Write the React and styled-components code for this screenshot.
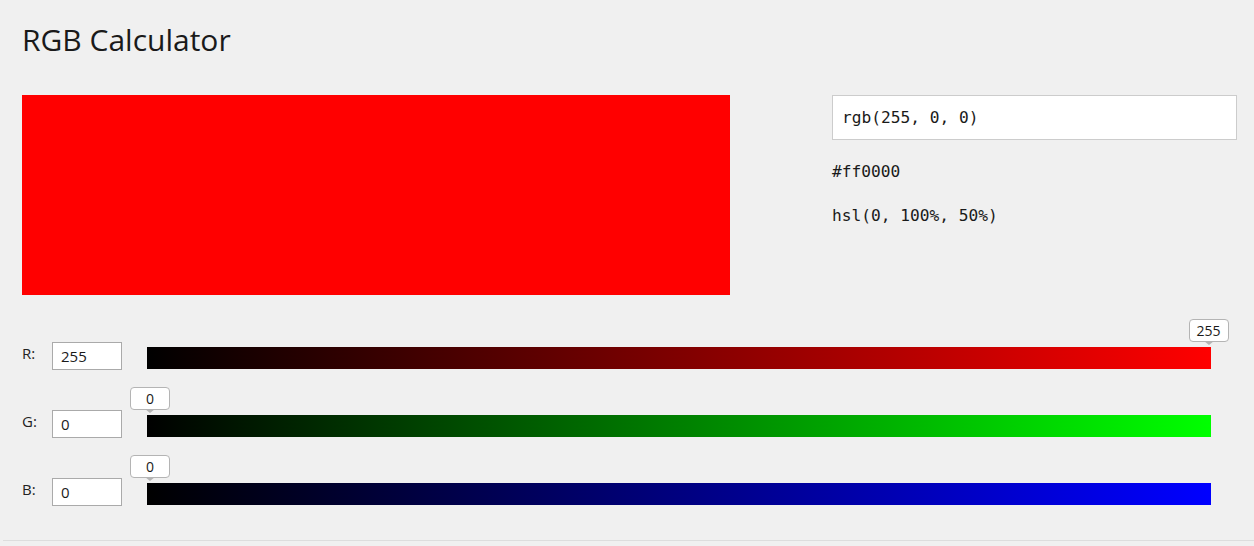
import React from "react";
import styled, { createGlobalStyle } from "styled-components";

const GlobalStyle = createGlobalStyle`
  *, *::before, *::after {
    box-sizing: border-box;
  }
  html, body {
    margin: 0;
    padding: 0;
    background: #f0f0f0;
    font-family: "Open Sans", "Noto Sans", sans-serif;
    color: #222;
  }
`;

const channels = [
  { key: "R", value: 255, to: "#ff0000" },
  { key: "G", value: 0, to: "#00ff00" },
  { key: "B", value: 0, to: "#0000ff" },
];

export default function App() {
  return (
    <>
      <GlobalStyle />
      <StyledPage>
        <StyledTitle>RGB Calculator</StyledTitle>
        <StyledTop>
          <StyledSwatch color="#ff0000" />
          <StyledOutputs>
            <StyledRgbBox>rgb(255, 0, 0)</StyledRgbBox>
            <StyledOutputLine>#ff0000</StyledOutputLine>
            <StyledOutputLine>hsl(0, 100%, 50%)</StyledOutputLine>
          </StyledOutputs>
        </StyledTop>
        <StyledSliders>
          {channels.map((c) => (
            <StyledRow key={c.key}>
              <StyledLabel>{c.key}:</StyledLabel>
              <StyledNumber>{c.value}</StyledNumber>
              <StyledTrack to={c.to}>
                <StyledTip style={{ left: `calc(3px + (100% - 5.5px) * ${c.value / 255})` }}>
                  {c.value}
                </StyledTip>
              </StyledTrack>
            </StyledRow>
          ))}
        </StyledSliders>
      </StyledPage>
      <StyledFooterLine />
    </>
  );
}

const StyledPage = styled.div`
  padding: 20px 17px 0 22px;
`;

const StyledTitle = styled.h1`
  margin: 0;
  font-size: 30px;
  line-height: 40px;
  font-weight: 400;
  color: #1a1a1a;
`;

const StyledTop = styled.div`
  display: flex;
  align-items: flex-start;
  margin-top: 35px;
`;

const StyledSwatch = styled.div`
  width: 708px;
  height: 200px;
  background: ${({ color }) => color};
  flex-shrink: 0;
`;

const StyledOutputs = styled.div`
  flex: 1;
  margin-left: 102px;
  display: flex;
  flex-direction: column;
  font-family: "DejaVu Sans Mono", "Liberation Mono", monospace;
  font-size: 16.2px;
  color: #1a1a1a;
`;

const StyledRgbBox = styled.div`
  height: 45px;
  border: 1px solid #cccccc;
  background: #ffffff;
  display: flex;
  align-items: center;
  padding-left: 9px;
`;

const StyledOutputLine = styled.div`
  line-height: 24px;
  margin-top: 20px;
  &:first-of-type {
    margin-top: 15px;
  }
`;

const StyledSliders = styled.div`
  margin-top: 47px;
  display: flex;
  flex-direction: column;
  gap: 40px;
  padding-right: 26px;
`;

const StyledRow = styled.div`
  display: flex;
  align-items: flex-start;
  height: 28px;
`;

const StyledLabel = styled.span`
  width: 30px;
  font-size: 15px;
  line-height: 22px;
  color: #222;
`;

const StyledNumber = styled.div`
  width: 70px;
  height: 28px;
  border: 1px solid #aaaaaa;
  background: #ffffff;
  padding-left: 8px;
  font-size: 15px;
  line-height: 26px;
  color: #1a1a1a;
`;

const StyledTrack = styled.div`
  position: relative;
  flex: 1;
  margin-left: 25px;
  margin-top: 5px;
  height: 22px;
  background: linear-gradient(to right, #000000, ${({ to }) => to});
`;

const StyledTip = styled.div`
  position: absolute;
  bottom: 27px;
  transform: translateX(-50%);
  min-width: 40px;
  height: 23px;
  padding: 0 6px;
  border: 1px solid #b4b4b4;
  border-radius: 4px;
  background: #ffffff;
  font-size: 14px;
  line-height: 21px;
  text-align: center;
  color: #1a1a1a;
  &::after {
    content: "";
    position: absolute;
    left: 50%;
    top: 100%;
    margin-left: -5px;
    margin-top: 0;
    border-left: 5px solid transparent;
    border-right: 5px solid transparent;
    border-top: 4px solid #b4b4b4;
  }
`;

const StyledFooterLine = styled.div`
  margin: 34px 0 0 3px;
  border-top: 1px solid #dddddd;
  height: 4px;
`;
